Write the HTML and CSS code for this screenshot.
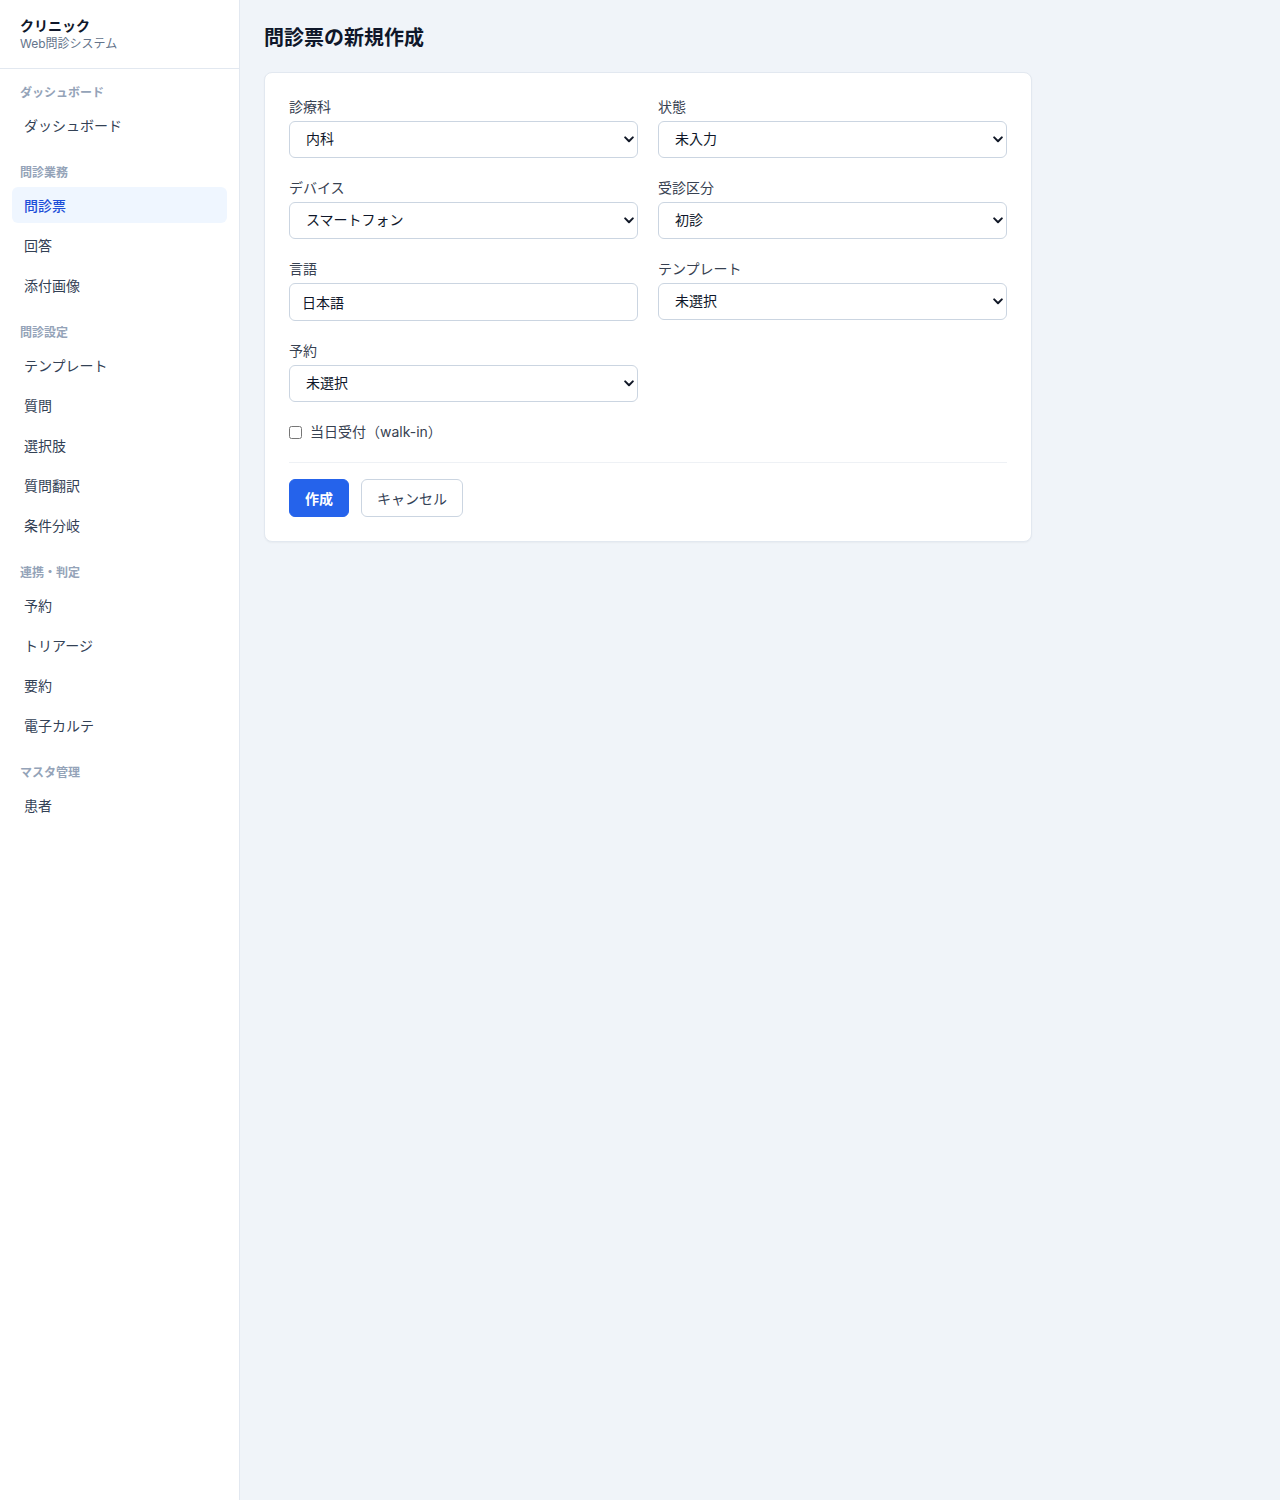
FILE: index.html
```html
<!DOCTYPE html>
<html lang="ja">
<head>
    <meta charset="UTF-8">
    <meta name="viewport" content="width=device-width, initial-scale=1.0">
    <title>問診票の新規作成</title>
    <link rel="stylesheet" href="styles.css">
</head>
<body>

    <div class="layout">
        <!-- Sidebar -->
        <aside class="sidebar">
            <div class="brand">
                <div class="brand-name">クリニック</div>
                <div class="brand-sub">Web問診システム</div>
            </div>
            <nav class="nav">
                <div class="nav-section">
                    <div class="nav-label">ダッシュボード</div>
                    <a class="nav-item" href="#">ダッシュボード</a>
                </div>
                <div class="nav-section">
                    <div class="nav-label">問診業務</div>
                    <a class="nav-item active" href="#">問診票</a>
                    <a class="nav-item" href="#">回答</a>
                    <a class="nav-item" href="#">添付画像</a>
                </div>
                <div class="nav-section">
                    <div class="nav-label">問診設定</div>
                    <a class="nav-item" href="#">テンプレート</a>
                    <a class="nav-item" href="#">質問</a>
                    <a class="nav-item" href="#">選択肢</a>
                    <a class="nav-item" href="#">質問翻訳</a>
                    <a class="nav-item" href="#">条件分岐</a>
                </div>
                <div class="nav-section">
                    <div class="nav-label">連携・判定</div>
                    <a class="nav-item" href="#">予約</a>
                    <a class="nav-item" href="#">トリアージ</a>
                    <a class="nav-item" href="#">要約</a>
                    <a class="nav-item" href="#">電子カルテ</a>
                </div>
                <div class="nav-section">
                    <div class="nav-label">マスタ管理</div>
                    <a class="nav-item" href="#">患者</a>
                </div>
            </nav>
        </aside>

        <!-- Main -->
        <main class="main">
            <h1 class="page-title">問診票の新規作成</h1>

            <form class="card">
                <div class="form-grid">
                    <div class="field">
                        <label for="dept">診療科</label>
                        <select id="dept">
                            <option>内科</option>
                        </select>
                    </div>
                    <div class="field">
                        <label for="status">状態</label>
                        <select id="status">
                            <option>未入力</option>
                        </select>
                    </div>
                    <div class="field">
                        <label for="device">デバイス</label>
                        <select id="device">
                            <option>スマートフォン</option>
                        </select>
                    </div>
                    <div class="field">
                        <label for="visit">受診区分</label>
                        <select id="visit">
                            <option>初診</option>
                        </select>
                    </div>
                    <div class="field">
                        <label for="lang">言語</label>
                        <input type="text" id="lang" value="日本語">
                    </div>
                    <div class="field">
                        <label for="template">テンプレート</label>
                        <select id="template">
                            <option>未選択</option>
                        </select>
                    </div>
                    <div class="field">
                        <label for="reservation">予約</label>
                        <select id="reservation">
                            <option>未選択</option>
                        </select>
                    </div>
                </div>

                <label class="check">
                    <input type="checkbox">
                    <span>当日受付（walk-in）</span>
                </label>

                <div class="actions">
                    <button type="submit" class="btn btn-primary">作成</button>
                    <button type="button" class="btn btn-secondary">キャンセル</button>
                </div>
            </form>
        </main>
    </div>

</body>
</html>
```

FILE: styles.css
```css
* {
    box-sizing: border-box;
}

body {
    font-family: Inter, "Noto Sans CJK JP", sans-serif;
    background-color: #f0f4f9;
    color: #334155;
    margin: 0;
    padding: 0;
}

.layout {
    display: flex;
    min-height: 1500px;
}

/* Sidebar */

.sidebar {
    width: 240px;
    flex-shrink: 0;
    background-color: #fff;
    border-right: 1px solid #e2e8f0;
}

.brand {
    padding: 16px 20px;
    border-bottom: 1px solid #e2e8f0;
    height: 69px;
}

.brand-name {
    font-size: 14px;
    line-height: 20px;
    font-weight: bold;
    color: #0f172a;
}

.brand-sub {
    font-size: 12px;
    line-height: 16px;
    color: #64748b;
}

.nav {
    padding: 16px 12px;
}

.nav-section {
    margin-bottom: 22px;
}

.nav-label {
    font-size: 12px;
    line-height: 16px;
    font-weight: bold;
    color: #94a3b8;
    padding: 0 8px;
    margin-bottom: 6px;
}

.nav-item {
    display: flex;
    align-items: center;
    height: 36px;
    padding: 0 12px;
    margin-bottom: 4px;
    font-size: 14px;
    color: #334155;
    text-decoration: none;
    border-radius: 6px;
}

.nav-item.active {
    background-color: #eff6ff;
    color: #1d4ed8;
    font-weight: 500;
}

/* Main */

.main {
    flex: 1;
    padding: 24px;
}

.page-title {
    font-size: 20px;
    line-height: 28px;
    font-weight: bold;
    color: #0f172a;
    margin: 0 0 20px;
}

.card {
    background-color: #fff;
    border: 1px solid #e2e8f0;
    border-radius: 8px;
    box-shadow: 0 1px 2px rgba(0, 0, 0, 0.04);
    padding: 24px;
    width: 768px;
}

.form-grid {
    display: grid;
    grid-template-columns: 1fr 1fr;
    column-gap: 20px;
    row-gap: 20px;
}

.field label {
    display: block;
    font-size: 14px;
    line-height: 20px;
    color: #374151;
    margin-bottom: 4px;
}

.field select,
.field input[type="text"] {
    display: block;
    width: 100%;
    height: 37px;
    font-family: inherit;
    font-size: 14px;
    line-height: 20px;
    color: #0f172a;
    background-color: #fff;
    border: 1px solid #cbd5e1;
    border-radius: 6px;
    padding: 0 16px 1px;
}

.field input[type="text"] {
    height: 38px;
    padding: 0 12px 1px;
}

.field select {
    appearance: none;
    -webkit-appearance: none;
    background-image: url("data:image/svg+xml,%3Csvg xmlns='http://www.w3.org/2000/svg' width='10' height='7' viewBox='0 0 10 7'%3E%3Cpath d='M1.2 1.4 5 5.2 8.8 1.4' fill='none' stroke='%23111827' stroke-width='2' stroke-linecap='round' stroke-linejoin='round'/%3E%3C/svg%3E");
    background-repeat: no-repeat;
    background-position: right 3px center;
    background-size: 10px 7px;
}

.check {
    display: flex;
    align-items: center;
    gap: 8px;
    margin-top: 20px;
    font-size: 14px;
    line-height: 20px;
    color: #374151;
}

.check input {
    width: 13px;
    height: 13px;
    margin: 0;
}

.actions {
    display: flex;
    gap: 12px;
    margin-top: 20px;
    padding-top: 16px;
    border-top: 1px solid #eef1f5;
}

.btn {
    height: 38px;
    padding: 0 15px 1px;
    font-family: inherit;
    font-size: 14px;
    border-radius: 6px;
    cursor: pointer;
}

.btn-primary {
    background-color: #2563eb;
    color: #fff;
    border: 1px solid #2563eb;
    font-weight: 600;
}

.btn-secondary {
    background-color: #fff;
    color: #334155;
    border: 1px solid #cbd5e1;
}
```
